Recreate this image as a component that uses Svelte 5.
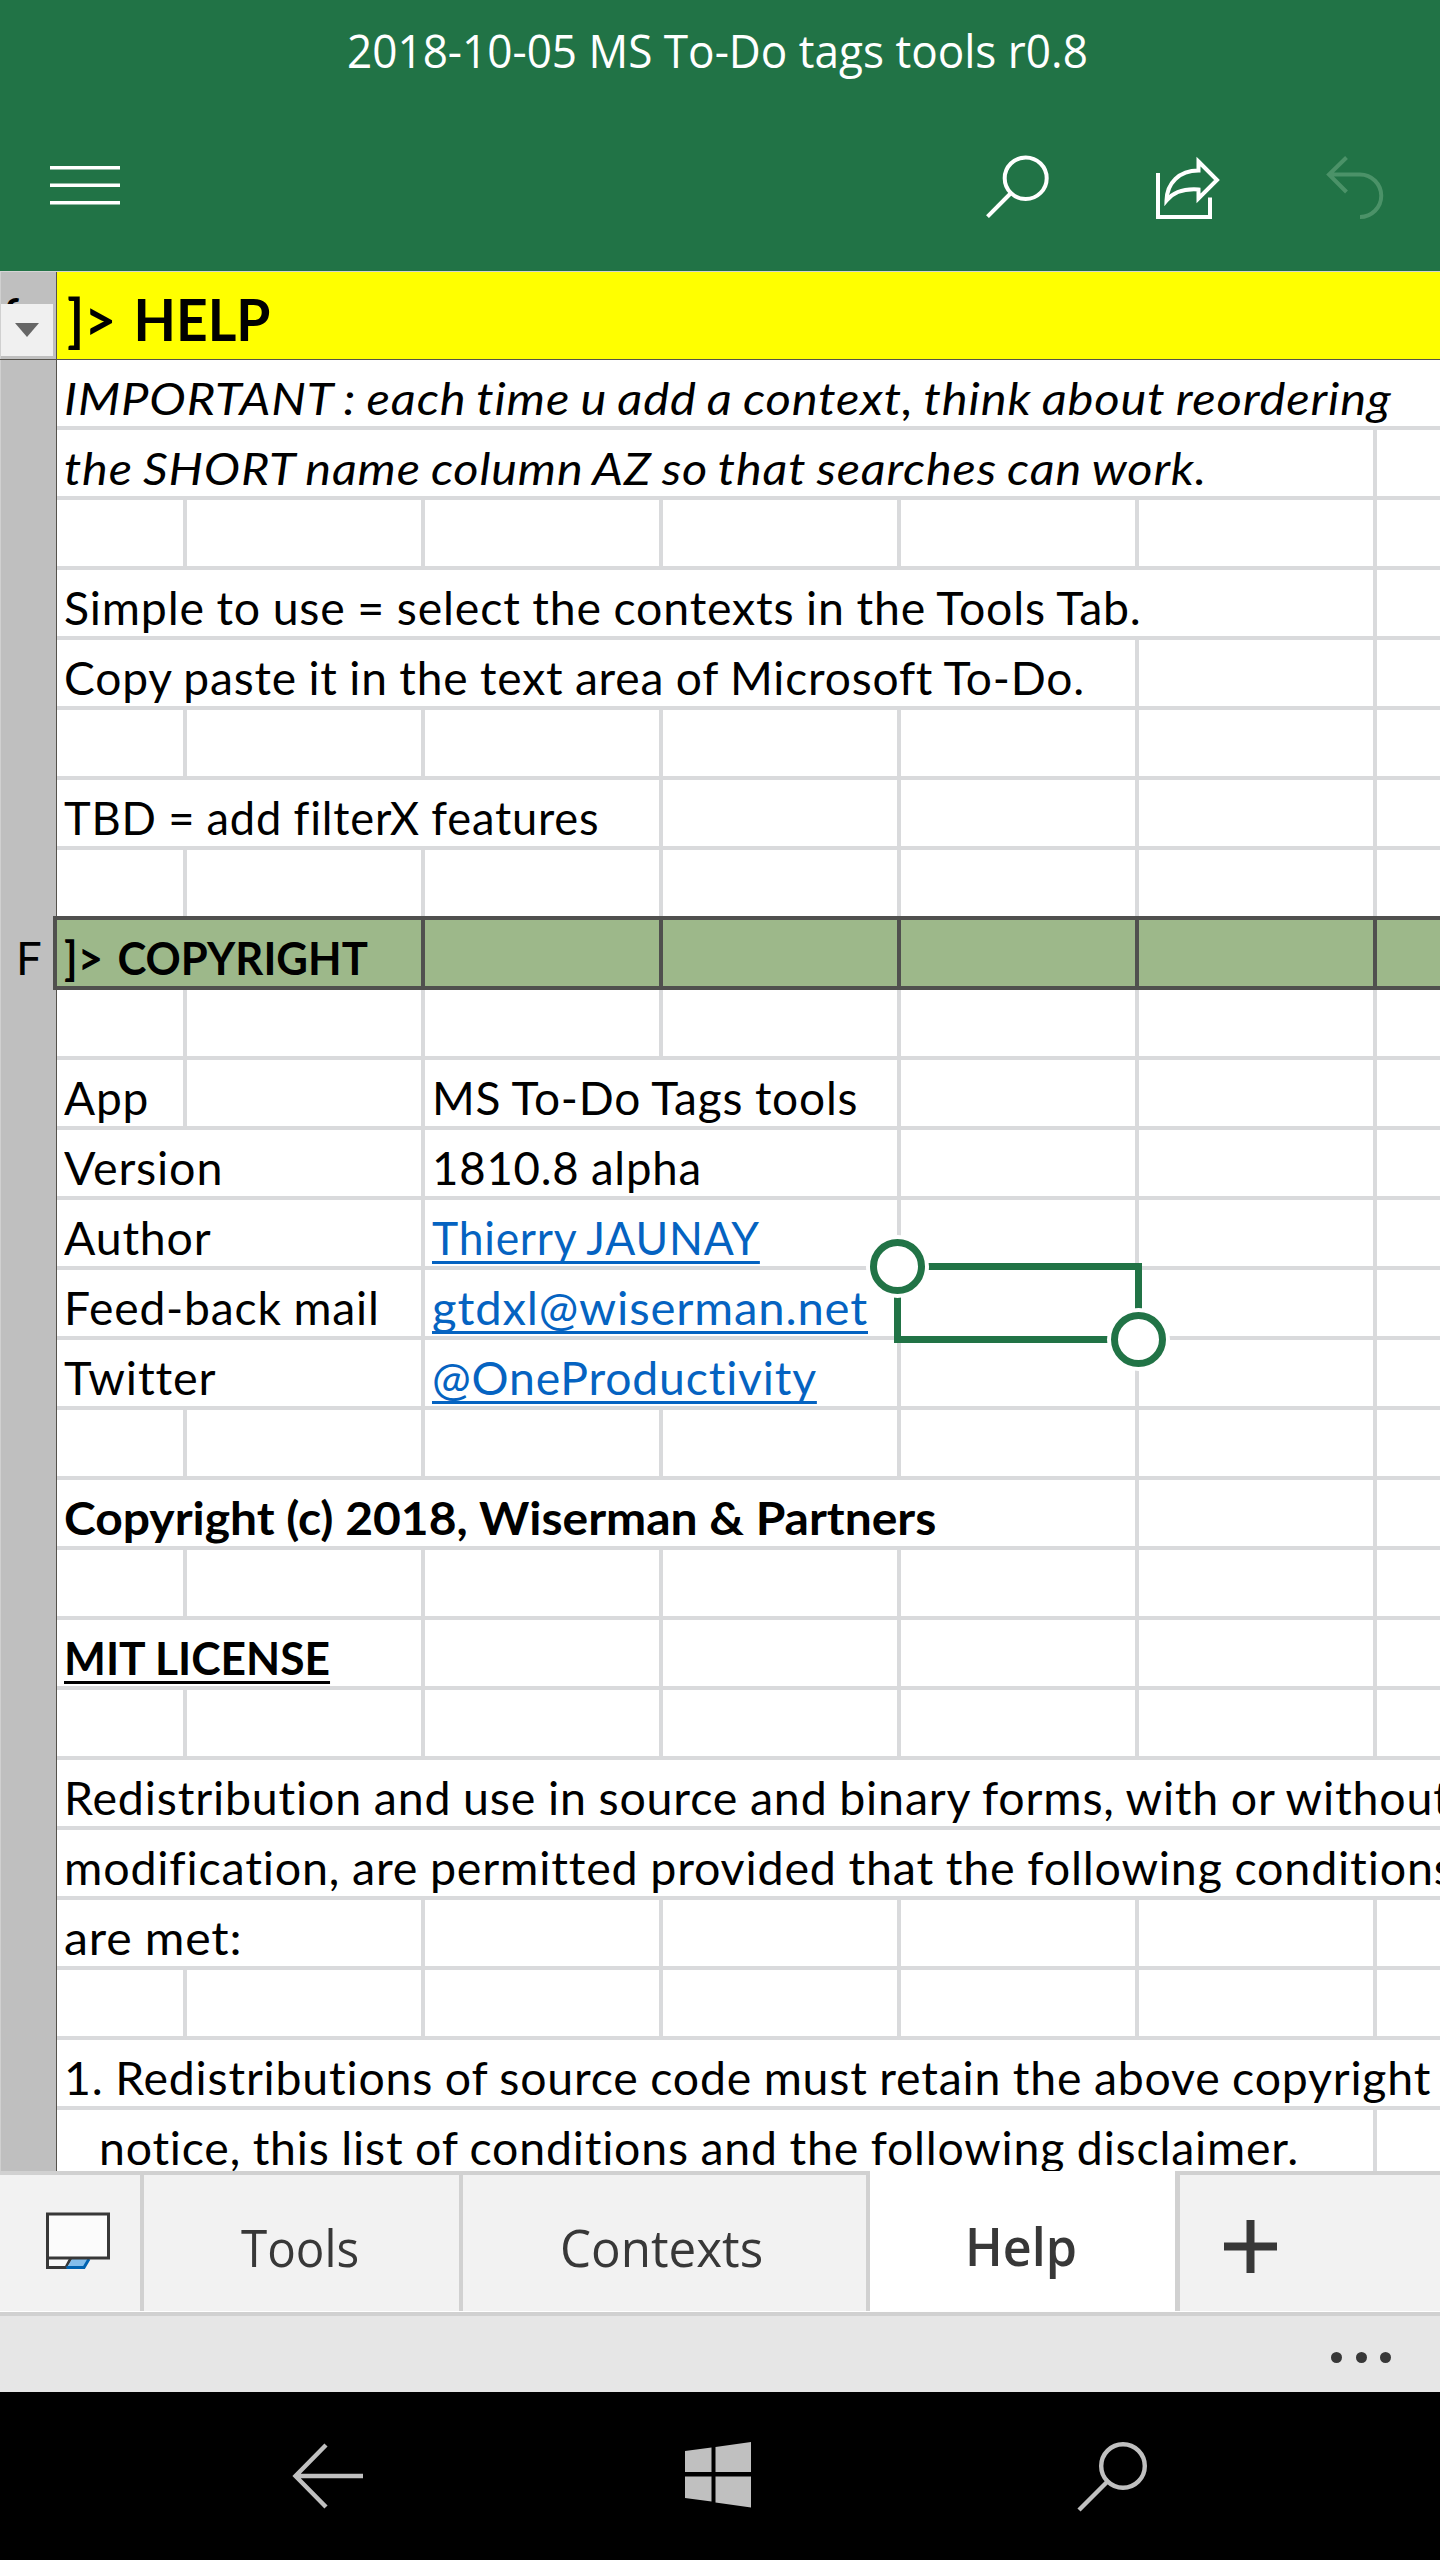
<script>
  // Each cell: t = text, w = drawn width of the text, span = columns it covers, k = style classes.
  const rows = [
    [{ t: 'IMPORTANT : each time u add a context, think about reordering', w: 1327, span: 7, k: 'italic' }],
    [{ t: 'the SHORT name column AZ so that searches can work.', w: 1143, span: 6, k: 'italic' }],
    [],
    [{ t: 'Simple to use = select the contexts in the Tools Tab.', w: 1078, span: 6 }],
    [{ t: 'Copy paste it in the text area of Microsoft To-Do.', w: 1021, span: 5 }],
    [],
    [{ t: 'TBD = add filterX features', w: 535, span: 3 }],
    [],
    [{ t: ']> COPYRIGHT', w: 304, span: 2, k: 'bold' }],
    [],
    [{ t: 'App', w: 85, span: 1 }, {}, { t: 'MS To-Do Tags tools', w: 426, span: 2 }],
    [{ t: 'Version', w: 159, span: 2 }, { t: '1810.8 alpha', w: 270, span: 2 }],
    [{ t: 'Author', w: 147, span: 2 }, { t: 'Thierry JAUNAY', w: 328, span: 2, k: 'link' }],
    [{ t: 'Feed-back mail', w: 316, span: 2 }, { t: 'gtdxl@wiserman.net', w: 436, span: 2, k: 'link' }],
    [{ t: 'Twitter', w: 152, span: 2 }, { t: '@OneProductivity', w: 385, span: 2, k: 'link' }],
    [],
    [{ t: 'Copyright (c) 2018, Wiserman & Partners', w: 872, span: 5, k: 'bold' }],
    [],
    [{ t: 'MIT LICENSE', w: 266, span: 2, k: 'bold under' }],
    [],
    [{ t: 'Redistribution and use in source and binary forms, with or without', w: 1387, span: 7 }],
    [{ t: 'modification, are permitted provided that the following conditions', w: 1391, span: 7 }],
    [{ t: 'are met:', w: 178, span: 2 }],
    [],
    [{ t: '1. Redistributions of source code must retain the above copyright', w: 1367, span: 7 }],
    [{ t: 'notice, this list of conditions and the following disclaimer.', w: 1200, span: 6, k: 'indent' }]
  ];

  // Fill a row out to its seven columns with empty cells.
  const fill = (cells) => {
    const used = cells.reduce((n, c) => n + (c.span ?? 1), 0);
    return [...cells, ...Array.from({ length: 7 - used }, () => ({}))];
  };

  const fit = (node, width) => {
    node.style.transform = `scaleX(${width / node.offsetWidth})`;
  };
</script>

<div class="screen">
  <header>
    <h1><span class="fit" use:fit={741}>2018-10-05 MS To-Do tags tools r0.8</span></h1>
    <div class="toolbar">
      <svg class="menu" width="70" height="39" viewBox="0 0 70 39"><path d="M0 1.8H70M0 19.2H70M0 36.8H70" /></svg>
      <svg width="64" height="66" viewBox="0 0 64 66"><ellipse cx="40.7" cy="24.2" rx="21" ry="20.8" /><path d="M25.5 39.5L2.5 62.7" /></svg>
      <svg class="share" width="68" height="66" viewBox="0 0 68 66"><path d="M5 19V63H57V43.5M45.5 7.5L64 26L45.5 44.500V35.500C31 34.500 20 38.500 13.500 46.500C14 29 26 16.500 45.500 16.500Z" /></svg>
      <svg class="undo" width="60" height="66" viewBox="0 0 60 66"><path d="M21.500 3.500L4 20.500L21.500 38M4 20.500H35A21 21 0 0 1 35 63" /></svg>
    </div>
  </header>

  <main>
    <div class="title-row">
      <div class="side">
        <span class="behind">f</span>
        <div class="filter"><svg width="24" height="14" viewBox="0 0 24 14"><path d="M0 0H24L12 14Z" /></svg></div>
      </div>
      <h2><span class="fit" use:fit={203}>]&gt; HELP</span></h2>
    </div>
    {#each rows as cells, i}
      <div class="row" class:section={i === 8}>
        <div class="side">{i === 8 ? 'F' : ''}</div>
        <div class="cells">
          {#each fill(cells) as c}
            <div class="cell s{c.span ?? 1} {c.k ?? ''}">
              {#if c.t}<span class="fit" use:fit={c.w}>{c.t}</span>{/if}
            </div>
          {/each}
        </div>
      </div>
    {/each}
    <svg class="selection" width="320" height="150" viewBox="860 1230 320 150">
      <rect x="897.5" y="1266.500" width="241" height="73" />
      <circle class="halo" cx="897.5" cy="1266.5" r="31.5" />
      <circle cx="897.5" cy="1266.5" r="24" />
      <circle class="halo" cx="1138.5" cy="1339.5" r="31.5" />
      <circle cx="1138.5" cy="1339.5" r="24" />
    </svg>
  </main>

  <nav class="tabs">
    <div class="tab sheets">
      <svg width="64" height="58" viewBox="0 0 64 58">
        <path d="M1.500 46V55.500H20L25 46" fill="#fbfbfb" stroke="#383838" stroke-width="3" />
        <path d="M26 47H44L38.500 56H20.500Z" fill="#83beec" />
        <path d="M20.500 55.500H38L43 47" fill="none" stroke="#0063b1" stroke-width="3" />
        <rect x="1.500" y="2" width="61" height="44" fill="#fbfbfb" stroke="#383838" stroke-width="3" />
      </svg>
    </div>
    <div class="tab tools"><span class="fit" use:fit={118}>Tools</span></div>
    <div class="tab contexts"><span class="fit" use:fit={203}>Contexts</span></div>
    <div class="tab help"><span class="fit" use:fit={112}>Help</span></div>
    <div class="tab add"><svg width="53" height="53" viewBox="0 0 53 53"><path d="M0 26.500H53M26.500 0V53" stroke="#383838" stroke-width="8" /></svg></div>
  </nav>

  <div class="more"><i></i><i></i><i></i></div>

  <footer>
    <svg width="72" height="68" viewBox="0 0 72 68"><path d="M34 4L3.500 35L34 66M3.500 35H71" /></svg>
    <svg class="win" width="67" height="68" viewBox="0 0 67 68"><path d="M0 10L26.500 6.500V31H0ZM30.500 6L66 1V31H30.500ZM0 35.500H26.500V60.500L0 57ZM30.500 35.500H66V66.500L30.500 61.500Z" /></svg>
    <svg width="72" height="72" viewBox="0 0 72 72"><circle cx="47" cy="25" r="21.800" /><path d="M31.500 40.500L3 69" /></svg>
  </footer>
</div>

<style>
  :global(body) { margin: 0; }
  .screen {
    width: 1440px;
    height: 2560px;
    display: flex;
    flex-direction: column;
    overflow: hidden;
    background: #fff;
    font-family: 'Open Sans', sans-serif;
  }
  svg { display: block; flex: none; }
  .fit { display: inline-block; transform-origin: 0 50%; white-space: pre; }
  header { height: 271px; background: #217346; color: #fff; flex: none; }
  h1 {
    margin: 0;
    height: 102px;
    padding-left: 347px;
    font-size: 46px;
    line-height: 100px;
    font-weight: 400;
  }
  .toolbar { display: flex; padding: 52px 54px 0 50px; }
  .toolbar svg { fill: none; stroke: #fff; stroke-width: 4; }
  .toolbar .menu { margin: 12px 865px 0 0; stroke-width: 3.6; }
  .toolbar .share { margin-left: 104px; }
  .toolbar .undo { margin-left: 104px; stroke: #4b9268; }

  main {
    position: relative;
    height: 1900px;
    overflow: hidden;
    flex: none;
    font-family: Lato, sans-serif;
    font-variant-ligatures: none;
    color: #000;
  }
  .side {
    width: 55px;
    flex: none;
    background: #bfbfbf;
    border-left: 1px solid #d0d0d0;
    border-right: 1px solid #55524c;
  }
  .title-row {
    display: flex;
    height: 87px;
    border-top: 1px solid #d4d4d4;
    border-bottom: 1px solid #55524c;
  }
  .title-row .side { display: flex; flex-direction: column; }
  .behind { height: 32px; overflow: hidden; padding-left: 1px; font: italic 700 44px/83px Lato, sans-serif; }
  .filter {
    width: 52px;
    height: 52px;
    background: #f0f0f0;
    display: flex;
    align-items: center;
    justify-content: center;
  }
  .filter path { fill: #666; }
  h2 {
    flex: 1;
    margin: 0;
    padding-left: 10px;
    background: #ff0;
    font-size: 57px;
    line-height: 95px;
    height: 87px;
    font-weight: 700;
    word-spacing: 4px;
  }
  .row { display: flex; height: 70px; font-size: 45.500px; line-height: 75px; letter-spacing: 0.8px; word-spacing: -1px; }
  .row .side { text-indent: 15px; height: 70px; }
  .cells {
    flex: 1;
    display: grid;
    grid-template-columns: 130px repeat(6, 238px);
    min-width: 0;
  }
  .cell {
    height: 66px;
    min-width: 0;
    padding-left: 7px;
    border-right: 4px solid #d9dadc;
    border-bottom: 4px solid #d9dadc;
    white-space: pre;
  }
  .s2 { grid-column: span 2; }
  .s3 { grid-column: span 3; }
  .s4 { grid-column: span 4; }
  .s5 { grid-column: span 5; }
  .s6 { grid-column: span 6; }
  .s7 { grid-column: span 7; }
  .italic { font-style: italic; word-spacing: -2px; }
  .bold { font-weight: 700; letter-spacing: 0; word-spacing: 0; }
  .indent { padding-left: 42px; }
  .link { color: #0563c1; }
  .link .fit, .under .fit {
    text-decoration: underline;
    text-decoration-thickness: 3px;
    text-underline-offset: 6px;
    text-decoration-skip-ink: none;
  }
  .section .cell { background: #9db88a; border-color: #50504e; word-spacing: 4px; }
  .section .cells { box-shadow: -4px 0 #50504e, 0 -4px #50504e, -4px -4px #50504e; z-index: 1; }
  .selection { position: absolute; left: 860px; top: 959px; z-index: 2; fill: none; stroke: #217346; stroke-width: 7; }
  .selection circle { fill: #fff; }
  .selection .halo { stroke: none; }

  .tabs { display: flex; height: 140px; flex: none; color: #383838; font-size: 52px; border-bottom: 1px solid #fff; }
  .tab {
    box-sizing: border-box;
    height: 140px;
    background: #f2f2f2;
    border-top: 4px solid #d1d1d1;
    border-right: 4px solid #d1d1d1;
    line-height: 144px;
  }
  .sheets { width: 144px; padding: 37px 0 0 46px; }
  .tools { width: 319px; padding-left: 97px; }
  .contexts { width: 407px; padding-left: 97px; }
  .help { width: 305px; padding-left: 95px; background: #fff; border-color: #fff; border-right: 0; font-weight: 600; line-height: 142px; }
  .add { flex: 1; padding: 45px 0 0 44px; border-left: 5px solid #d1d1d1; border-right: 0; }
  .more {
    box-sizing: border-box;
    height: 80px;
    flex: none;
    display: flex;
    justify-content: flex-end;
    gap: 13.500px;
    padding: 36px 49px 0 0;
    background: #e6e6e6;
    border-top: 4px solid #d1d1d1;
  }
  .more i { width: 11px; height: 11px; border-radius: 50%; background: #383838; }
  footer { display: flex; flex: 1; background: #000; padding: 49px 0 0 292px; }
  footer svg { fill: none; stroke: #c0c0c0; stroke-width: 4.400; }
  footer .win { fill: #c0c0c0; stroke: none; margin: 0 324px 0 321px; }
</style>
